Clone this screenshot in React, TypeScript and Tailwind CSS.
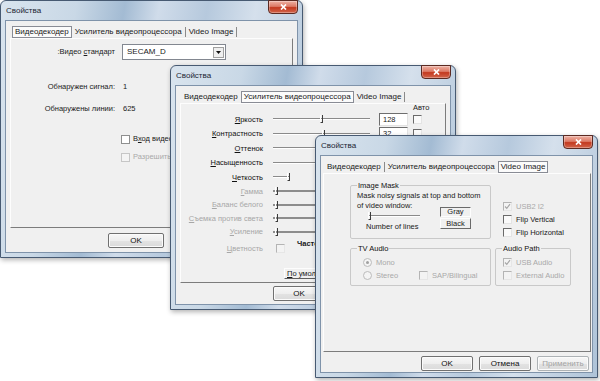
import type { ReactNode } from 'react';

const TABS = ['Видеодекодер', 'Усилитель видеопроцессора', 'Video Image'];

interface SliderRow {
  label: string;
  pos: number;
  value: string;
  disabled?: boolean;
  short?: boolean;
}

// values below the second row sit under the front dialog, so they stay empty
const ROWS: SliderRow[] = [
  { label: 'Яркость', pos: 47, value: '128' },
  { label: 'Контрастность', pos: 49, value: '32' },
  { label: 'Оттенок', pos: 60, value: '' },
  { label: 'Насыщенность', pos: 60, value: '' },
  { label: 'Четкость', pos: 14, value: '', short: true },
  { label: 'Гамма', pos: 2, value: '', disabled: true },
  { label: 'Баланс белого', pos: 2, value: '', disabled: true },
  { label: 'Съемка против света', pos: 2, value: '', disabled: true },
  { label: 'Усиление', pos: 2, value: '', disabled: true },
];

function CloseButton() {
  return (
    <div className="-mt-[1px] flex h-[14px] w-[30px] shrink-0 items-center justify-center rounded-b-[4px] border border-[#5b2a22] bg-[linear-gradient(#eeb2a4_0%,#dc7a66_45%,#c3391f_55%,#d2664c_100%)] shadow-[inset_0_0_0_1px_rgba(255,255,255,0.3)]">
      <svg width="7" height="6" viewBox="0 0 7 6">
        <path d="M1 0.5 L6 5.5 M6 0.5 L1 5.5" stroke="white" strokeWidth="1.7" />
      </svg>
    </div>
  );
}

function Window({ className, children }: { className: string; children: ReactNode }) {
  return (
    <div
      className={`absolute flex flex-col rounded-t-[6px] border border-[#475a72] bg-[linear-gradient(100deg,#d9e4ee_0%,#c9d8e6_22%,#a3bbd3_36%,#d0dcea_46%,#b6c9dd_60%,#d5e0ec_74%,#aec3d8_100%)] px-[4px] pb-[4px] shadow-[1px_2px_5px_rgba(0,0,0,0.3)] ${className}`}
    >
      <div className="flex h-[19px] shrink-0 items-start justify-between">
        <span className="mt-[5px] pl-[1px] text-[8px] leading-[10px] text-[#1c2633]">Свойства</span>
        <CloseButton />
      </div>
      <div className="flex flex-1 flex-col border border-[#7f93aa] bg-[#f0f0f0]">{children}</div>
    </div>
  );
}

function Tabs({ active, className }: { active: number; className: string }) {
  return (
    <div className={`flex h-[12px] shrink-0 text-[8px] ${className}`}>
      {TABS.map((name, i) =>
        i === active ? (
          <span key={name} className="border border-[#898c95] bg-[#fbfbfb] px-[2px] leading-[10px]">
            {name}
          </span>
        ) : (
          <span
            key={name}
            className={`my-[1px] px-[3px] leading-[9px] ${i + 1 === active ? '' : 'border-r border-[#8a8a8a]'}`}
          >
            {name}
          </span>
        ),
      )}
    </div>
  );
}

function Panel({ className, children }: { className?: string; children: ReactNode }) {
  return (
    <div
      className={`flex flex-1 flex-col border border-t-[#fdfdfd] border-l-[#fdfdfd] border-b-[#7c7c7c] border-r-[#7c7c7c] ${className ?? ''}`}
    >
      {children}
    </div>
  );
}

function Btn({ className, disabled, children }: { className: string; disabled?: boolean; children: ReactNode }) {
  return (
    <div
      className={`flex h-[15px] shrink-0 items-center justify-center rounded-[2px] border bg-[linear-gradient(#f7f7f7,#eeeeee_50%,#e3e3e3_51%,#dadada)] text-[8px] shadow-[inset_0_0_0_1px_#fbfbfb] ${disabled ? 'border-[#adb2b5] text-[#a3a3a3]' : 'border-[#707070] text-[#111]'} ${className}`}
    >
      {children}
    </div>
  );
}

function Check({ checked, disabled, box }: { checked?: boolean; disabled?: boolean; box?: boolean }) {
  let tone = disabled
    ? 'border-t-[#b4b4b4] border-l-[#b4b4b4] border-b-[#e6e6e6] border-r-[#e6e6e6] bg-[#f3f3f3]'
    : 'border-t-[#6a6a6a] border-l-[#6a6a6a] border-b-[#e4e4e4] border-r-[#e4e4e4] bg-[#fafafa]';
  if (box) tone = disabled ? 'border-[#c6c6c6] bg-[#f4f4f4]' : 'border-[#8e8f8f] bg-white';
  return (
    <span className={`flex h-[9px] w-[9px] shrink-0 items-center justify-center border ${tone}`}>
      {checked && (
        <svg width="7" height="7" viewBox="0 0 7 7">
          <path d="M1 3.5 L2.8 5.3 L6 1.2" fill="none" stroke={disabled ? '#a5a5a5' : '#333'} strokeWidth="1.1" />
        </svg>
      )}
    </span>
  );
}

function Radio({ checked }: { checked?: boolean }) {
  return (
    <span className="flex h-[9px] w-[9px] shrink-0 items-center justify-center rounded-full border border-[#bcbcbc] bg-[#f4f4f4]">
      {checked && <span className="h-[3px] w-[3px] rounded-full bg-[#a0a0a0]" />}
    </span>
  );
}

function Slider({ className, pos, disabled, short }: { className: string; pos: number; disabled?: boolean; short?: boolean }) {
  return (
    <div className={`relative h-[10px] shrink-0 ${className}`}>
      <div
        className={`absolute left-0 top-[4px] h-[2px] ${short ? 'w-[16px]' : 'right-0'} ${disabled ? 'bg-[#8d8d8d]' : 'border-t border-b border-t-[#8a8a8a] border-b-white'}`}
      />
      <div
        className="absolute top-[1px] h-[8px] w-[3px] border-r border-b border-l border-r-[#3c3c3c] border-b-[#3c3c3c] border-l-white"
        style={{ left: pos }}
      />
    </div>
  );
}

function ValueBox({ children }: { children: ReactNode }) {
  return (
    <span className="ml-[9px] flex h-[13px] w-[29px] shrink-0 items-center border border-t-[#6e6e6e] border-l-[#6e6e6e] border-b-[#e2e2e2] border-r-[#e2e2e2] bg-white pl-[3px]">
      {children}
    </span>
  );
}

function Underlined({ text, at = 0 }: { text: string; at?: number }) {
  return (
    <>
      {text.slice(0, at)}
      <u>{text[at]}</u>
      {text.slice(at + 1)}
    </>
  );
}

function DecoderWindow() {
  return (
    <Window className="left-0 top-0 h-[258px] w-[303px]">
      <div className="flex flex-1 flex-col px-[4px] pt-[5px] pb-[4px]">
        <Tabs active={0} className="pl-[2px]" />
        <Panel className="text-[7.5px] leading-[10px]">
          <div className="mt-[5px] flex items-center">
            <span className="w-[104px] text-right">
              :Видео <Underlined text="стандарт" />
            </span>
            <div className="ml-[7px] flex h-[16px] w-[104px] items-center justify-between border border-[#828790] bg-white pl-[4px] pr-[1px]">
              <span className="text-[8px]">SECAM_D</span>
              <span className="flex h-[11px] w-[11px] items-center justify-center border border-[#a0a0a0] bg-[#efefef]">
                <svg width="5" height="3" viewBox="0 0 5 3">
                  <path d="M0 0 H5 L2.5 3 Z" fill="#111" />
                </svg>
              </span>
            </div>
          </div>
          <div className="mt-[22px] flex h-[10px] items-center">
            <span className="w-[104px] text-right">Обнаружен сигнал:</span>
            <span className="ml-[8px]">1</span>
          </div>
          <div className="mt-[12px] flex h-[10px] items-center">
            <span className="w-[104px] text-right">Обнаружены линии:</span>
            <span className="ml-[8px]">625</span>
          </div>
          <div className="mt-[20px] flex h-[10px] items-center pl-[110px]">
            <Check box />
            <span className="ml-[3px] whitespace-nowrap">
              В<u>х</u>од видео
            </span>
          </div>
          <div className="mt-[8px] flex h-[10px] items-center pl-[110px] text-[#a9a9a9]">
            <Check box disabled />
            <span className="ml-[3px] whitespace-nowrap">Разрешить</span>
          </div>
        </Panel>
        <div className="mt-[5px] flex justify-end gap-[8px] pr-[1px]">
          <Btn className="w-[56px]">OK</Btn>
          <Btn className="w-[56px]">Отмена</Btn>
          <Btn className="w-[56px]" disabled>
            Применить
          </Btn>
        </div>
      </div>
    </Window>
  );
}

function AmplifierWindow() {
  return (
    <Window className="left-[170px] top-[65px] h-[245px] w-[286px]">
      <div className="flex flex-1 flex-col px-[4px] pt-[5px] pb-[3px]">
        <Tabs active={1} className="pl-[1px]" />
        <Panel className="text-[7.5px] leading-[9px]">
          <div className="h-[8px] pl-[232px] leading-[8px]">Авто</div>
          {ROWS.map((row) => (
            <div key={row.label} className={`flex items-center ${row.disabled ? 'h-[13.5px]' : 'h-[14.5px]'}`}>
              <span className={`w-[82px] shrink-0 text-right ${row.disabled ? 'text-[#a7a7a7]' : 'text-[#111]'}`}>
                <Underlined text={row.label} />
              </span>
              <Slider className="ml-[10px] w-[97px]" pos={row.pos} disabled={row.disabled} short={row.short} />
              <ValueBox>{row.value}</ValueBox>
              <span className="ml-[5px]">
                <Check disabled={row.disabled} />
              </span>
            </div>
          ))}
          <div className="mt-[3px] flex h-[13px] items-center">
            <span className="w-[82px] shrink-0 text-right text-[#a7a7a7]">
              <Underlined text="Цветность" />
            </span>
            <span className="ml-[13px]">
              <Check disabled />
            </span>
            <span className="mb-[10px] ml-[12px] whitespace-nowrap font-bold">Частота</span>
          </div>
          <div className="mt-[13px] ml-[103px] flex h-[11px] w-[80px] items-center border border-t-[#fdfdfd] border-l-[#fdfdfd] border-b-[#5e5e5e] border-r-[#5e5e5e] pl-[2px]">
            <Underlined text="По умолчанию" />
          </div>
        </Panel>
        <div className="mt-[3px] flex justify-end gap-[6px] pr-[5px]">
          <Btn className="w-[52px]">OK</Btn>
          <Btn className="w-[52px]">Отмена</Btn>
          <Btn className="w-[52px]" disabled>
            Применить
          </Btn>
        </div>
      </div>
    </Window>
  );
}

function Group({ label, className, children }: { label: string; className?: string; children: ReactNode }) {
  return (
    <fieldset className={`rounded-[2px] border border-[#c9c9c9] px-[6px] ${className ?? ''}`}>
      <legend className="px-[1px] leading-[9px] text-[#111]">{label}</legend>
      {children}
    </fieldset>
  );
}

function ImageWindow() {
  return (
    <Window className="left-[315px] top-[135px] h-[243px] w-[283px]">
      <div className="flex flex-1 flex-col pl-[2px] pr-[1px] pt-[5px] pb-[1px]">
        <Tabs active={2} className="pl-[1px]" />
        <Panel className="pl-[26px] pt-[7px] text-[7.5px]">
          <div className="grid grid-cols-[141px_75px] gap-x-[4px] gap-y-[5px]">
            <Group label="Image Mask" className="pb-[3px]">
              <div className="mt-[1px] whitespace-nowrap leading-[10px]">Mask noisy signals at top and bottom</div>
              <div className="flex">
                <div className="flex w-[83px] flex-col">
                  <span className="leading-[10px]">of video window:</span>
                  <Slider className="ml-[11px] w-[52px]" pos={0} />
                  <span className="mt-[1px] ml-[9px] leading-[10px]">Number of lines</span>
                </div>
                <div className="flex flex-col">
                  <span className="mt-[6px] flex h-[10px] w-[31px] items-center justify-center border border-t-[#6a6a6a] border-l-[#6a6a6a] border-b-[#fdfdfd] border-r-[#fdfdfd]">
                    Gray
                  </span>
                  <span className="mt-[1px] flex h-[11px] w-[31px] items-center justify-center border border-t-[#fdfdfd] border-l-[#fdfdfd] border-b-[#6a6a6a] border-r-[#6a6a6a]">
                    Black
                  </span>
                </div>
              </div>
            </Group>
            <div className="flex flex-col pl-[8px] pt-[19px] leading-[9px]">
              <div className="flex h-[13px] items-center gap-[4px] whitespace-nowrap text-[#a9a9a9]">
                <Check checked disabled />
                USB2 I2
              </div>
              <div className="flex h-[13px] items-center gap-[4px] whitespace-nowrap">
                <Check />
                Flip Vertical
              </div>
              <div className="flex h-[13px] items-center gap-[4px] whitespace-nowrap">
                <Check />
                Flip Horizontal
              </div>
            </div>
            <Group label="TV Audio" className="pb-[3px]">
              <div className="mt-[3px] flex flex-col pl-[6px] leading-[9px] text-[#a9a9a9]">
                <div className="flex h-[13px] items-center gap-[4px]">
                  <Radio checked />
                  Mono
                </div>
                <div className="flex h-[13px] items-center">
                  <span className="flex w-[56px] items-center gap-[4px]">
                    <Radio />
                    Stereo
                  </span>
                  <Check disabled />
                  <span className="ml-[4px]">SAP/Bilingual</span>
                </div>
              </div>
            </Group>
            <Group label="Audio Path" className="pb-[3px]">
              <div className="mt-[3px] flex flex-col pl-[1px] leading-[9px] text-[#a9a9a9]">
                <div className="flex h-[13px] items-center gap-[4px] whitespace-nowrap">
                  <Check checked disabled />
                  USB Audio
                </div>
                <div className="flex h-[13px] items-center gap-[4px] whitespace-nowrap">
                  <Check disabled />
                  External Audio
                </div>
              </div>
            </Group>
          </div>
        </Panel>
        <div className="mt-[4px] flex justify-end gap-[6px] pr-[2px]">
          <Btn className="w-[52px]">OK</Btn>
          <Btn className="w-[52px]">Отмена</Btn>
          <Btn className="w-[52px]" disabled>
            Применить
          </Btn>
        </div>
      </div>
    </Window>
  );
}

export default function App() {
  return (
    <div className="relative h-[381px] w-[600px] overflow-hidden bg-white text-[#1a1a1a] [font-family:'Liberation_Sans',Arial,sans-serif]">
      <DecoderWindow />
      <AmplifierWindow />
      <ImageWindow />
    </div>
  );
}
